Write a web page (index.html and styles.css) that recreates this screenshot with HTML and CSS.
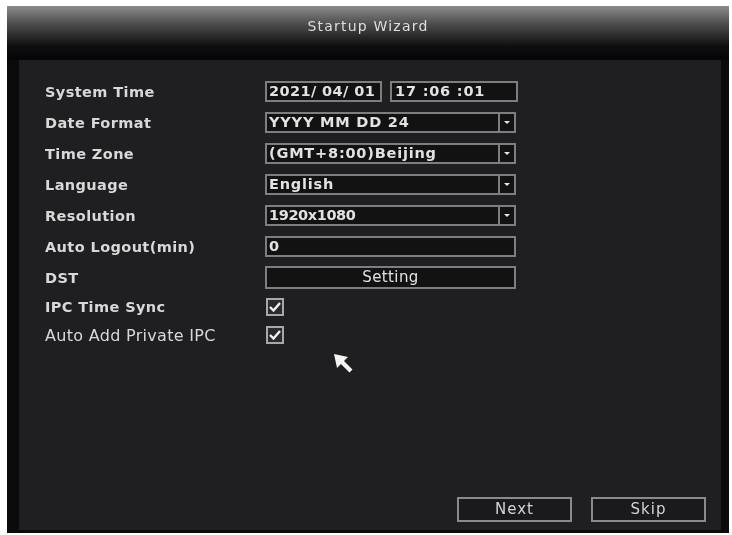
FILE: index.html
```html
<!DOCTYPE html>
<html lang="en">
<head>
    <meta charset="UTF-8">
    <title>Startup Wizard</title>
    <link rel="stylesheet" href="styles.css">
</head>
<body>
    <div class="wizard">
        <div class="title-bar">Startup Wizard</div>
        <div class="panel">
            <div class="form">
                <div class="row">
                    <div class="label">System Time</div>
                    <div class="field">
                        <div class="box date-box">2021/ 04/ 01</div>
                        <div class="box time-box">17 :06 :01</div>
                    </div>
                </div>
                <div class="row">
                    <div class="label">Date Format</div>
                    <div class="field">
                        <div class="box select"><span class="value">YYYY MM DD 24</span><span class="arrow"></span></div>
                    </div>
                </div>
                <div class="row">
                    <div class="label">Time Zone</div>
                    <div class="field">
                        <div class="box select"><span class="value">(GMT+8:00)Beijing</span><span class="arrow"></span></div>
                    </div>
                </div>
                <div class="row">
                    <div class="label">Language</div>
                    <div class="field">
                        <div class="box select"><span class="value">English</span><span class="arrow"></span></div>
                    </div>
                </div>
                <div class="row">
                    <div class="label">Resolution</div>
                    <div class="field">
                        <div class="box select"><span class="value tight">1920x1080</span><span class="arrow"></span></div>
                    </div>
                </div>
                <div class="row">
                    <div class="label">Auto Logout(min)</div>
                    <div class="field">
                        <div class="box wide">0</div>
                    </div>
                </div>
                <div class="row">
                    <div class="label">DST</div>
                    <div class="field">
                        <div class="box wide btn-box">Setting</div>
                    </div>
                </div>
                <div class="row check-row">
                    <div class="label">IPC Time Sync</div>
                    <div class="field">
                        <span class="checkbox">
                            <svg width="14" height="14" viewBox="0 0 14 14"><path d="M2 7 L5.5 10.5 L12 3" fill="none" stroke="#f2f2f2" stroke-width="2.4"/></svg>
                        </span>
                    </div>
                </div>
                <div class="row check-row">
                    <div class="label narrow">Auto Add Private IPC</div>
                    <div class="field">
                        <span class="checkbox">
                            <svg width="14" height="14" viewBox="0 0 14 14"><path d="M2 7 L5.5 10.5 L12 3" fill="none" stroke="#f2f2f2" stroke-width="2.4"/></svg>
                        </span>
                    </div>
                </div>
            </div>

            <div class="actions">
                <div class="button">Next</div>
                <div class="button">Skip</div>
            </div>

            <!-- mouse pointer on the OSD -->
            <svg class="pointer" width="20" height="20" viewBox="0 0 20 20">
                <polygon points="0,0 14,3 10,7 18.5,15.5 15.5,18.5 7,10 3,14" fill="#f4f4f4"/>
            </svg>
        </div>
    </div>
</body>
</html>
```

FILE: styles.css
```css
* {
    margin: 0;
    padding: 0;
    box-sizing: border-box;
}

body {
    background-color: #fff;
    font-family: 'DejaVu Sans', 'Liberation Sans', Arial, sans-serif;
    color: #dcdcdc;
}

.wizard {
    width: 722px;
    height: 527px;
    margin: 6px 0 0 7px;
    background-color: #0b0b0c;
    display: flex;
    flex-direction: column;
    padding: 0 8px 3px 12px;
    filter: blur(0.45px);
}

.title-bar {
    height: 54px;
    margin: 0 -8px 0 -12px;
    padding-top: 12px;
    text-align: center;
    font-size: 14px;
    letter-spacing: 1.2px;
    color: #dedede;
    background: linear-gradient(to bottom, #8c8c8c 0%, #4a4a4a 35%, #0e0e10 75%, #050507 100%);
}

.panel {
    flex: 1;
    position: relative;
    background-color: #1f1f21;
    display: flex;
    flex-direction: column;
    justify-content: space-between;
    padding: 16px 15px 8px 26px;
}

.row {
    display: flex;
    align-items: center;
    height: 31px;
}

.check-row {
    height: 28px;
}

.label {
    width: 220px;
    font-size: 14.5px;
    font-weight: bold;
    letter-spacing: 0.4px;
    color: #d8d8d8;
}

.label.narrow {
    font-weight: normal;
    font-size: 16px;
    letter-spacing: 0.3px;
}

.field {
    display: flex;
    gap: 8px;
}

.box {
    height: 21px;
    border: 2px solid #7e7e80;
    background-color: #121213;
    font-size: 14.5px;
    font-weight: bold;
    letter-spacing: 0.8px;
    line-height: 17px;
    padding-left: 2px;
    color: #e2e2e2;
    display: flex;
    white-space: nowrap;
}

.date-box {
    width: 117px;
    letter-spacing: 0.4px;
}

.time-box {
    width: 128px;
    padding-left: 3px;
}

.select {
    width: 251px;
    padding-left: 0;
}

.select .value {
    flex: 1;
    padding-left: 2px;
}

.select .value.tight {
    letter-spacing: -0.4px;
}

.select .arrow {
    width: 16px;
    border-left: 2px solid #7e7e80;
    position: relative;
}

.select .arrow::after {
    content: '';
    position: absolute;
    left: 4px;
    top: 7px;
    border-left: 3px solid transparent;
    border-right: 3px solid transparent;
    border-top: 3px solid #e8e8e8;
}

.wide {
    width: 251px;
}

.btn-box {
    height: 23px;
    justify-content: center;
    padding-left: 0;
    font-weight: normal;
    font-size: 15px;
    letter-spacing: 0.4px;
    line-height: 19px;
}

.checkbox {
    width: 18px;
    height: 18px;
    margin-left: 1px;
    border: 2px solid #a8a8a8;
    background-color: #2a2a2c;
    display: flex;
    align-items: center;
    justify-content: center;
}

.actions {
    display: flex;
    justify-content: flex-end;
    gap: 19px;
}

.button {
    width: 115px;
    height: 25px;
    border: 2px solid #8a8a8c;
    background-color: #1a1a1c;
    text-align: center;
    font-size: 15px;
    letter-spacing: 1px;
    line-height: 21px;
    color: #d4d4d4;
}

.pointer {
    position: absolute;
    left: 315px;
    top: 294px;
}
```
